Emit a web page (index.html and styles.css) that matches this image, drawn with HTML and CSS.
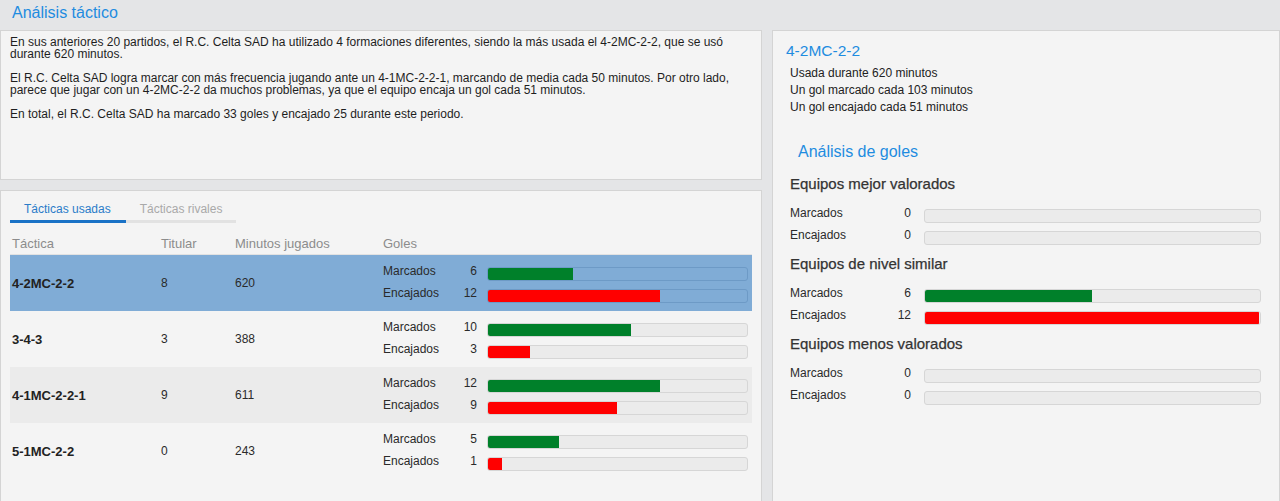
FILE: index.html
```html
<!DOCTYPE html>
<html lang="es">
<head>
<meta charset="utf-8">
<title>Análisis táctico</title>
<link rel="stylesheet" href="styles.css">
</head>
<body>
<h1 class="page-title">Análisis táctico</h1>
<div class="layout">
  <div class="left-col">
    <section class="panel summary">
      <p>En sus anteriores 20 partidos, el R.C. Celta SAD ha utilizado 4 formaciones diferentes, siendo la más usada el 4-2MC-2-2, que se usó durante 620 minutos.</p>
      <p>El R.C. Celta SAD logra marcar con más frecuencia jugando ante un 4-1MC-2-2-1, marcando de media cada 50 minutos. Por otro lado, parece que jugar con un 4-2MC-2-2 da muchos problemas, ya que el equipo encaja un gol cada 51 minutos.</p>
      <p>En total, el R.C. Celta SAD ha marcado 33 goles y encajado 25 durante este periodo.</p>
    </section>
    <section class="panel tactics">
      <div class="tabs">
        <span class="tab active">Tácticas usadas</span>
        <span class="tab">Tácticas rivales</span>
      </div>
      <table class="tactic-table">
        <thead>
          <tr><th class="c-name">Táctica</th><th class="c-tit">Titular</th><th class="c-min">Minutos jugados</th><th class="c-goals">Goles</th></tr>
        </thead>
        <tbody>
          <tr class="selected">
            <td class="name">4-2MC-2-2</td><td>8</td><td>620</td>
            <td class="goals">
              <div class="gl"><span class="lbl">Marcados</span><span class="num">6</span><span class="bar"><span class="fill green" style="width:33.3%"></span></span></div>
              <div class="gl"><span class="lbl">Encajados</span><span class="num">12</span><span class="bar"><span class="fill red" style="width:66.7%"></span></span></div>
            </td>
          </tr>
          <tr>
            <td class="name">3-4-3</td><td>3</td><td>388</td>
            <td class="goals">
              <div class="gl"><span class="lbl">Marcados</span><span class="num">10</span><span class="bar"><span class="fill green" style="width:55.6%"></span></span></div>
              <div class="gl"><span class="lbl">Encajados</span><span class="num">3</span><span class="bar"><span class="fill red" style="width:16.7%"></span></span></div>
            </td>
          </tr>
          <tr class="striped">
            <td class="name">4-1MC-2-2-1</td><td>9</td><td>611</td>
            <td class="goals">
              <div class="gl"><span class="lbl">Marcados</span><span class="num">12</span><span class="bar"><span class="fill green" style="width:66.7%"></span></span></div>
              <div class="gl"><span class="lbl">Encajados</span><span class="num">9</span><span class="bar"><span class="fill red" style="width:50%"></span></span></div>
            </td>
          </tr>
          <tr>
            <td class="name">5-1MC-2-2</td><td>0</td><td>243</td>
            <td class="goals">
              <div class="gl"><span class="lbl">Marcados</span><span class="num">5</span><span class="bar"><span class="fill green" style="width:27.8%"></span></span></div>
              <div class="gl"><span class="lbl">Encajados</span><span class="num">1</span><span class="bar"><span class="fill red" style="width:5.6%"></span></span></div>
            </td>
          </tr>
        </tbody>
      </table>
    </section>
  </div>
  <aside class="panel detail">
    <h2 class="detail-title">4-2MC-2-2</h2>
    <ul class="facts">
      <li>Usada durante 620 minutos</li>
      <li>Un gol marcado cada 103 minutos</li>
      <li>Un gol encajado cada 51 minutos</li>
    </ul>
    <h2 class="goals-title">Análisis de goles</h2>
    <div class="group">
      <h3>Equipos mejor valorados</h3>
      <div class="grow"><span class="lbl">Marcados</span><span class="num">0</span><span class="bar"><span class="fill green" style="width:0%"></span></span></div>
      <div class="grow"><span class="lbl">Encajados</span><span class="num">0</span><span class="bar"><span class="fill red" style="width:0%"></span></span></div>
    </div>
    <div class="group">
      <h3>Equipos de nivel similar</h3>
      <div class="grow"><span class="lbl">Marcados</span><span class="num">6</span><span class="bar"><span class="fill green" style="width:50%"></span></span></div>
      <div class="grow"><span class="lbl">Encajados</span><span class="num">12</span><span class="bar"><span class="fill red" style="width:100%"></span></span></div>
    </div>
    <div class="group">
      <h3>Equipos menos valorados</h3>
      <div class="grow"><span class="lbl">Marcados</span><span class="num">0</span><span class="bar"><span class="fill green" style="width:0%"></span></span></div>
      <div class="grow"><span class="lbl">Encajados</span><span class="num">0</span><span class="bar"><span class="fill red" style="width:0%"></span></span></div>
    </div>
  </aside>
</div>
</body>
</html>
```
FILE: styles.css
```css
* { box-sizing: border-box; }

html, body {
  margin: 0;
  padding: 0;
}

body {
  background: #e4e5e7;
  font-family: "Liberation Sans", Arial, sans-serif;
  color: #222;
  width: 1280px;
  height: 501px;
  overflow: hidden;
}

.page-title {
  margin: 0;
  height: 30px;
  padding-left: 12px;
  font-size: 16px;
  font-weight: normal;
  line-height: 26px;
  color: #1e8ce0;
}

.layout {
  display: grid;
  grid-template-columns: 762px 508px;
  column-gap: 10px;
}

.left-col {
  display: flex;
  flex-direction: column;
  gap: 10px;
}

.panel {
  background: #f4f4f4;
  border: 1px solid #d4d4d4;
}

/* summary */
.summary {
  height: 150px;
  padding: 5px 9px;
  font-size: 12px;
  line-height: 12px;
  color: #1e1e1e;
}

.summary p {
  margin: 0 0 12px;
}

/* tactics */
.tactics {
  height: 330px;
  padding: 0 9px;
}

.tabs {
  display: flex;
  margin-top: 8px;
}

.tab {
  padding: 0 14px 1px 14px;
  font-size: 12px;
  line-height: 20px;
  color: #a9a9a9;
  border-bottom: 3px solid #e2e2e2;
}

.tab.active {
  padding-right: 15px;
  color: #2a7cc9;
  border-bottom-color: #1a72c6;
}

.tactic-table {
  width: 742px;
  margin-top: 11px;
  border-collapse: collapse;
  table-layout: fixed;
  font-size: 12px;
}

.tactic-table th {
  text-align: left;
  font-weight: normal;
  font-size: 13px;
  color: #8c8c8c;
  padding: 0 0 0 2px;
  height: 20px;
  line-height: 20px;
  vertical-align: middle;
  border-bottom: 1px solid #e2e2e2;
}

.c-name { width: 149px; }
.c-tit { width: 74px; }
.c-min { width: 148px; }

.tactic-table td {
  padding: 0 0 0 2px;
  height: 56px;
  vertical-align: middle;
  color: #2a2a2a;
}

.tactic-table td.name {
  font-weight: bold;
  font-size: 13px;
  color: #222;
}

.tactic-table td.goals {
  vertical-align: top;
  padding: 12px 4px 0 2px;
}

.selected { background: #80acd6; }
.striped { background: #ebebeb; }

.gl {
  display: flex;
  align-items: flex-start;
  height: 22px;
}

.gl .lbl {
  width: 70px;
  line-height: 8px;
}

.gl .num {
  width: 24px;
  text-align: right;
  line-height: 8px;
  margin-right: 10px;
}

.bar {
  display: block;
  flex: 1;
  height: 14px;
  background: #ebebeb;
  border: 1px solid #d6d6d6;
  border-radius: 3px;
  overflow: hidden;
}

.selected .bar {
  background: #80acd6;
  border-color: #6d9ac6;
}

.fill {
  display: block;
  height: 14px;
  margin: -1px 0 0 -1px;
}

.fill.green { background: #00802a; }
.fill.red { background: #ff0000; }

/* right panel */
.detail {
  height: 480px;
  padding: 11px 18px 0 13px;
}

.detail-title {
  margin: 0;
  font-size: 15.5px;
  font-weight: normal;
  line-height: 18px;
  color: #1e8ce0;
}

.facts {
  list-style: none;
  margin: 5px 0 0;
  padding: 0 0 0 4px;
  font-size: 12px;
  line-height: 17px;
  color: #222;
}

.goals-title {
  margin: 26px 0 0 12px;
  font-size: 16px;
  font-weight: normal;
  line-height: 20px;
  color: #1e8ce0;
}

.group {
  padding-left: 4px;
}

.group h3 {
  margin: 12px 0 15px;
  font-size: 15px;
  font-weight: normal;
  line-height: 20px;
  color: #333;
  -webkit-text-stroke: 0.25px #333;
}

.group + .group h3 {
  margin-top: 1px;
}

.grow {
  display: flex;
  align-items: flex-start;
  height: 22px;
  font-size: 12px;
  color: #2a2a2a;
}

.grow .lbl {
  width: 90px;
  line-height: 9px;
}

.grow .num {
  width: 31px;
  text-align: right;
  line-height: 9px;
  margin-right: 13px;
}
```
